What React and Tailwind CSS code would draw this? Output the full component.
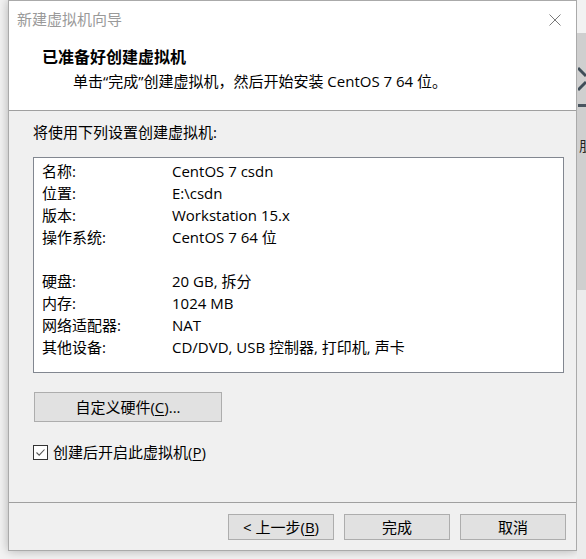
import React from "react";

const rows = [
  ["名称:", "CentOS 7 csdn"],
  ["位置:", "E:\\csdn"],
  ["版本:", "Workstation 15.x"],
  ["操作系统:", "CentOS 7 64 位"],
  null,
  ["硬盘:", "20 GB, 拆分"],
  ["内存:", "1024 MB"],
  ["网络适配器:", "NAT"],
  ["其他设备:", "CD/DVD, USB 控制器, 打印机, 声卡"],
];

const WinButton = ({ className = "", children }) => (
  <button
    type="button"
    className={`flex items-center justify-center border border-[#adadad] bg-[#e1e1e1] text-[15px] text-black ${className}`}
  >
    {children}
  </button>
);

export default function App() {
  return (
    <div className="w-[586px] h-[559px] flex bg-[#f3f3f3] overflow-hidden font-['Open_Sans','Noto_Sans_CJK_SC',sans-serif] text-black">
      {/* left gap */}
      <div className="w-[8px] shrink-0" />

      {/* dialog window */}
      <div className="w-[569px] h-[551px] shrink-0 flex flex-col border border-[#aaaaaa] bg-[#f0f0f0] shadow-[0_0_10px_rgba(0,0,0,0.28)]">
        {/* title + header */}
        <div className="h-[110px] bg-white border-b border-[#a0a0a0] flex flex-col">
          <div className="h-[37px] flex items-center justify-between pl-[8px] pr-[15px]">
            <span className="text-[15px] text-[#9a9a9a] leading-none">新建虚拟机向导</span>
            <svg width="12" height="12" viewBox="0 0 12 12" className="shrink-0">
              <path d="M0.5 0.5 L11.5 11.5 M11.5 0.5 L0.5 11.5" stroke="#7a7a7a" strokeWidth="1" />
            </svg>
          </div>
          <div className="pt-[8px] pl-[33px] text-[16px] font-bold leading-[22px]">已准备好创建虚拟机</div>
          <div className="mt-[2px] pl-[64px] text-[15px] leading-[22px]">
            单击“完成”创建虚拟机，然后开始安装 CentOS 7 64 位。
          </div>
        </div>

        {/* body */}
        <div className="flex-1 flex flex-col pl-[24px] pt-[10px]">
          <div className="text-[15px] leading-[22px]">将使用下列设置创建虚拟机:</div>

          <div className="mt-[14px] w-[531px] h-[216px] border border-[#828790] bg-white pt-[2px] pl-[8px]">
            {rows.map((r, i) =>
              r ? (
                <div key={i} className="grid grid-cols-[130px_1fr] h-[22px] items-center text-[15px]">
                  <span>{r[0]}</span>
                  <span>{r[1]}</span>
                </div>
              ) : (
                <div key={i} className="h-[22px]" />
              )
            )}
          </div>

          <WinButton className="mt-[19px] ml-[1px] w-[188px] h-[30px]">
            自定义硬件(<span className="underline underline-offset-2">C</span>)...
          </WinButton>

          <label className="mt-[19px] h-[22px] flex items-center gap-[5px] text-[15px]">
            <span className="w-[15px] h-[15px] border border-[#333333] bg-white flex items-center justify-center">
              <svg width="11" height="11" viewBox="0 0 11 11">
                <path d="M1.5 5.5 L4.2 8.2 L9.5 2.5" fill="none" stroke="#555555" strokeWidth="1.1" />
              </svg>
            </span>
            <span>
              创建后开启此虚拟机(<span className="underline underline-offset-2">P</span>)
            </span>
          </label>
        </div>

        {/* footer */}
        <div className="h-[48px] border-t border-[#a0a0a0] flex justify-end items-start pt-[11px] pr-[10px] gap-[10px]">
          <WinButton className="w-[106px] h-[26px]">
            &lt; 上一步(<span className="underline underline-offset-2">B</span>)
          </WinButton>
          <WinButton className="w-[106px] h-[26px]">完成</WinButton>
          <WinButton className="w-[106px] h-[26px]">取消</WinButton>
        </div>
      </div>

      {/* background window peeking out on the right */}
      <div className="flex-1 flex flex-col">
        <div className="h-[33px] bg-[#f2f2f2]" />
        <div className="h-[257px] bg-[#cfcfcf] flex flex-col pl-[1px]">
          <svg width="8" height="26" viewBox="0 0 8 26" className="mt-[33px]">
            <path d="M0 2 L8 10 M0 24 L8 16" stroke="#3f4d58" strokeWidth="3" fill="none" />
          </svg>
          <div className="mt-[12px] h-[3px] w-full bg-[#4a5560]" />
          <div className="mt-[32px] pl-[1px] text-[14px] leading-[14px] text-[#222] whitespace-nowrap">朋</div>
        </div>
        <div className="flex-1 bg-[#ececec]" />
      </div>
    </div>
  );
}
